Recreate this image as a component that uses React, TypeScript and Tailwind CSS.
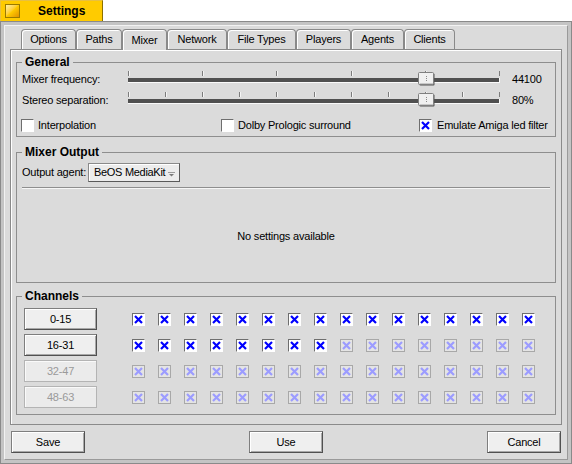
import React from 'react';

const tabs: [string, number][] = [
  ['Options', 55],
  ['Paths', 46],
  ['Mixer', 45],
  ['Network', 60],
  ['File Types', 69],
  ['Players', 55],
  ['Agents', 53],
  ['Clients', 51],
];

const Check = ({ on = true, disabled = false }: { on?: boolean; disabled?: boolean }) => (
  <span
    className={
      disabled
        ? 'flex h-[13px] w-[13px] shrink-0 items-center justify-center border border-[#a8a8a8] bg-[#e4e4e4]'
        : 'flex h-[13px] w-[13px] shrink-0 items-center justify-center border border-t-[#6e6e6e] border-l-[#6e6e6e] border-b-white border-r-white bg-white'
    }
  >
    {on && (
      <svg width="9" height="9" viewBox="0 0 9 9">
        <path d="M1 1L8 8M8 1L1 8" stroke={disabled ? '#9c9cff' : '#0000ff'} strokeWidth="2.2" />
      </svg>
    )}
  </span>
);

const Slider = ({ ticks }: { ticks: number }) => (
  <svg width="372" height="21" className="shrink-0">
    {Array.from({ length: ticks }).map((_, i) => {
      const x = Math.round((i * 371) / (ticks - 1)) + 0.5;
      return (
        <g key={i}>
          <line x1={x} y1={2} x2={x} y2={7} stroke="#7c7c7c" />
          {i < ticks - 1 && <line x1={x + 1} y1={2} x2={x + 1} y2={7} stroke="#f4f4f4" />}
        </g>
      );
    })}
    <rect x={0} y={9} width={372} height={5} fill="#fafafa" />
    <rect x={0} y={9} width={371} height={4} fill="#505050" />
    {/* thumb */}
    <rect x={291.5} y={4.5} width={15} height={12} rx={1} fill="#555" />
    <rect x={290.5} y={3.5} width={15} height={12} rx={1} fill="#f0f0f0" stroke="#808080" />
    <line x1={291.5} y1={14.5} x2={305} y2={14.5} stroke="#c8c8c8" />
    <rect x={298} y={7} width={1} height={1} fill="#8a8a8a" />
    <rect x={298} y={9} width={1} height={1} fill="#8a8a8a" />
    <rect x={298} y={11} width={1} height={1} fill="#8a8a8a" />
  </svg>
);

const Btn = ({ children, disabled = false, w = 'w-[74px]' }: { children: React.ReactNode; disabled?: boolean; w?: string }) => (
  <div
    className={
      disabled
        ? `${w} flex h-[22px] items-center justify-center border border-[#b4b4b4] bg-[#ebebeb] text-[#9a9a9a] shadow-[inset_1px_1px_0_#fafafa]`
        : `${w} flex h-[22px] items-center justify-center border border-[#7e7e7e] border-r-[#505050] border-b-[#505050] bg-[#efefef] shadow-[inset_1px_1px_0_#ffffff,inset_-1px_-1px_0_#a8a8a8]`
    }
  >
    {children}
  </div>
);

const Legend = ({ children }: { children: React.ReactNode }) => (
  <legend className="px-[3px] text-[12px] font-bold leading-[14px] tracking-normal">{children}</legend>
);

export default function App() {
  return (
    <div className="h-[464px] w-[572px] bg-white font-['Liberation_Sans',Arial,sans-serif] text-[11px] tracking-[-0.2px] text-black">
      {/* title tab */}
      <div className="flex h-[21px] w-[103px] items-center border border-b-0 border-[#e8c040] border-r-[#8c7000] bg-[#ffcb00]">
        <span className="ml-[4px] h-[14px] w-[15px] border border-[#9a7a00] bg-gradient-to-br from-[#fff0a0] via-[#ffcb00] to-[#e09000]" />
        <span className="ml-[18px] text-[12px] font-bold tracking-normal">Settings</span>
      </div>

      {/* window */}
      <div className="h-[443px] border border-[#8a8a8a] bg-[#c4c4c4] p-[3px]">
        <div className="flex h-full flex-col border border-[#f2f2f2] border-r-[#9a9a9a] border-b-[#9a9a9a] bg-[#dbdbdb] px-[4px] pt-[3px]">
          {/* tabs */}
          <div className="ml-[12px] flex h-[20px] items-end">
            {tabs.map(([t, w]) => {
              const sel = t === 'Mixer';
              return (
                <div
                  key={t}
                  style={{ width: w }}
                  className={
                    sel
                      ? 'relative z-10 -mb-px flex h-[21px] items-center justify-center rounded-t-[4px] border border-b-0 border-[#8a8a8a] bg-[#dbdbdb] shadow-[inset_1px_1px_0_#fff]'
                      : 'flex h-[20px] items-center justify-center rounded-t-[4px] border border-b-0 border-[#8a8a8a] bg-[#dbdbdb] shadow-[inset_1px_1px_0_#fff]'
                  }
                >
                  {t}
                </div>
              );
            })}
          </div>

          {/* tab box */}
          <div className="ml-px flex h-[376px] w-[552px] flex-col border border-[#8a8a8a] px-[5px] pt-[5px] shadow-[inset_1px_1px_0_#fff]">
            {/* General */}
            <fieldset className="h-[82px] border border-[#8e8e8e] px-[5px]">
              <Legend>General</Legend>
              <div className="flex h-[21px] items-center">
                <span className="w-[106px]">Mixer frequency:</span>
                <Slider ticks={6} />
                <span className="ml-[12px]">44100</span>
              </div>
              <div className="flex h-[21px] items-center">
                <span className="w-[106px]">Stereo separation:</span>
                <Slider ticks={11} />
                <span className="ml-[12px]">80%</span>
              </div>
              <div className="mt-[7px] flex h-[14px] items-center">
                <div className="-ml-px flex w-[200px] items-center gap-[4px]">
                  <Check on={false} />
                  <span>Interpolation</span>
                </div>
                <div className="flex w-[198px] items-center gap-[4px]">
                  <Check on={false} />
                  <span>Dolby Prologic surround</span>
                </div>
                <div className="flex items-center gap-[5px]">
                  <Check />
                  <span>Emulate Amiga led filter</span>
                </div>
              </div>
            </fieldset>

            {/* Mixer Output */}
            <fieldset className="mt-[8px] flex h-[138px] flex-col border border-[#8e8e8e] px-[5px]">
              <Legend>Mixer Output</Legend>
              <div className="mt-[4px] flex h-[19px] items-center">
                <span className="w-[66px] whitespace-nowrap">Output agent:</span>
                <div className="flex h-[19px] shrink-0 items-center whitespace-nowrap border border-[#8a8a8a] border-r-[#5a5a5a] border-b-[#5a5a5a] bg-[#ececec] pl-[5px] pr-[4px] shadow-[inset_1px_1px_0_#fff]">
                  <span className="tracking-[-0.3px]">BeOS MediaKit</span>
                  <svg width="7" height="5" className="ml-[3px] mt-[3px] shrink-0">
                    <path d="M0 0.5H7" stroke="#9a9a9a" />
                    <path d="M1 2H6L3.5 4.5Z" fill="#7a7a7a" />
                  </svg>
                </div>
              </div>
              <div className="mt-[5px] h-px w-full bg-[#8e8e8e]" />
              <div className="h-px w-full bg-[#f6f6f6]" />
              <div className="flex h-[94px] items-center justify-center">No settings available</div>
            </fieldset>

            {/* Channels */}
            <fieldset className="mt-[6px] h-[126px] border border-[#8e8e8e] px-[5px]">
              <Legend>Channels</Legend>
              <div className="mt-[5px] flex flex-col gap-[4px]">
                {['0-15', '16-31', '32-47', '48-63'].map((label, r) => (
                  <div key={label} className="ml-[2px] flex h-[22px] items-center">
                    <Btn w="w-[73px]" disabled={r > 1}>
                      {label}
                    </Btn>
                    <div className="ml-[35px] flex gap-[13px]">
                      {Array.from({ length: 16 }).map((_, c) => (
                        <Check key={c} disabled={r > 1 || (r === 1 && c > 7)} />
                      ))}
                    </div>
                  </div>
                ))}
              </div>
            </fieldset>
          </div>

          {/* bottom buttons */}
          <div className="mt-[6px] flex items-center justify-between px-[2px]">
            <Btn>Save</Btn>
            <Btn>Use</Btn>
            <Btn>Cancel</Btn>
          </div>
        </div>
      </div>
    </div>
  );
}
